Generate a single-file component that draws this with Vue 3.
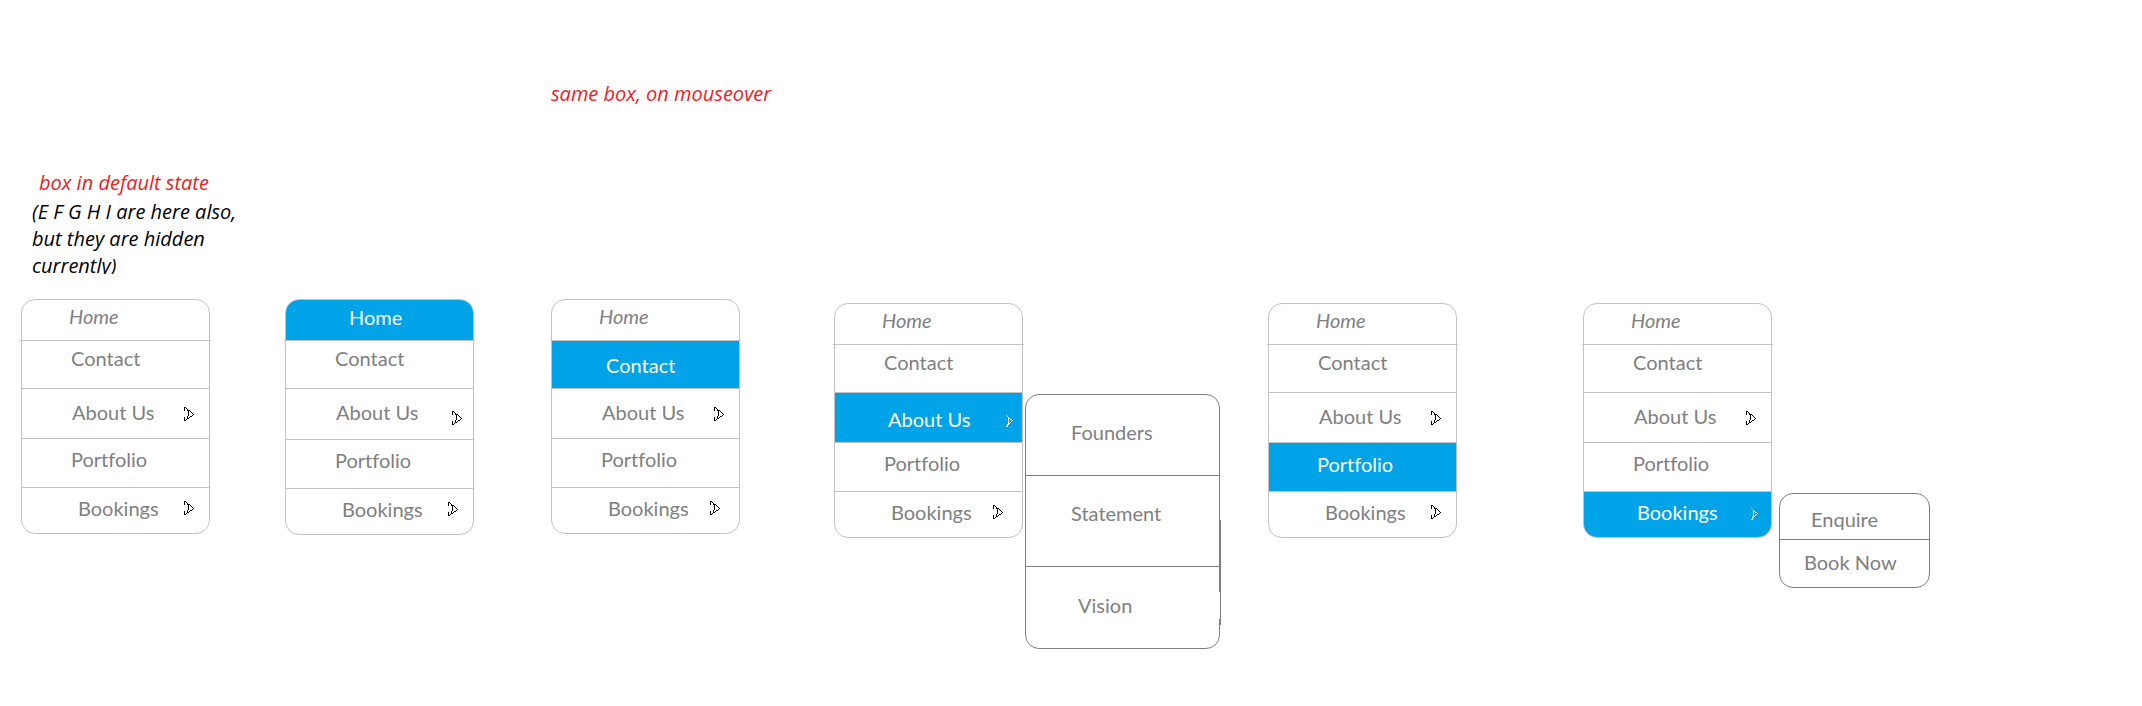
<script setup>
const entries = [
  { key: 'home', label: 'Home' },
  { key: 'contact', label: 'Contact' },
  { key: 'about', label: 'About Us', arrow: true },
  { key: 'portfolio', label: 'Portfolio' },
  { key: 'bookings', label: 'Bookings', arrow: true },
]

const menus = [
  { id: 'default', active: null },
  { id: 'on-home', active: 'home' },
  { id: 'on-contact', active: 'contact' },
  {
    id: 'on-about',
    active: 'about',
    low: true,
    sub: { name: 'about', items: ['Founders', 'Statement', 'Vision'] },
  },
  { id: 'on-portfolio', active: 'portfolio', low: true },
  {
    id: 'on-bookings',
    active: 'bookings',
    low: true,
    sub: { name: 'bookings', items: ['Enquire', 'Book Now'] },
  },
]
</script>

<template>
  <main class="board">
    <section class="notes">
      <div class="note-default">
        <p class="red indent">box in default state</p>
        <p class="hidden-note">(E F G H I are here also,<br />but they are hidden<br />currently)</p>
      </div>
      <p class="note-hover red">same box, on mouseover</p>
    </section>

    <section class="menus">
      <div v-for="menu in menus" :key="menu.id" class="state" :class="[menu.id, { low: menu.low }]">
        <nav :aria-label="menu.id">
          <ul class="menu">
            <li v-for="entry in entries" :key="entry.key" :class="entry.key">
              <a href="#" class="item" :class="{ active: menu.active === entry.key }">
                <span>{{ entry.label }}</span>
                <svg
                  v-if="entry.arrow && menu.active === entry.key"
                  class="arrow"
                  width="8"
                  height="12"
                  viewBox="0 0 8 12"
                  aria-hidden="true"
                >
                  <path
                    d="M0 0h1v1h-1zM1 1h1v1h-1zM2 2h1v7h-1zM1 9h1v2h-1zM0 11h2v1h-2zM3 3h1v1h-1zM4 4h2v1h-2zM6 5h1v1h-1zM5 6h1v1h-1zM4 7h1v1h-1zM3 8h1v1h-1zM2 9h1v1h-1z"
                  />
                </svg>
                <svg
                  v-else-if="entry.arrow"
                  class="arrow"
                  width="10"
                  height="14"
                  viewBox="0 0 10 14"
                  aria-hidden="true"
                >
                  <path
                    d="M0 0h2v1h-1v3h-1zM2 1h1v1h-1zM3 2h1v2h-1zM4 3h2v1h-2zM6 4h1v1h-1zM7 5h1v1h-1zM8 6h1v1h-1zM9 7h1v1h-1zM8 8h1v1h-1zM6 9h2v1h-2zM5 10h1v1h-1zM4 11h1v1h-1zM4 4h1v5h-1zM3 9h1v3h-1zM2 12h1v1h-1zM0 10h1v3h1v1h-2z"
                  />
                </svg>
              </a>
            </li>
          </ul>
        </nav>

        <ul v-if="menu.sub" class="submenu" :class="'sub-' + menu.sub.name">
          <li v-for="label in menu.sub.items" :key="label">
            <a href="#" class="subitem">{{ label }}</a>
          </li>
        </ul>
      </div>
    </section>
  </main>
</template>

<style>
body {
  margin: 0;
  background: #fff;
}
</style>

<style scoped>
.board {
  font-family: Lato, 'Open Sans', sans-serif;
  font-size: 20px;
  font-variant-ligatures: none;
  line-height: 24px;
  color: #7f7f7f;
  padding: 80px 0 56px 21px;
}

p,
ul {
  margin: 0;
  padding: 0;
  list-style: none;
}

.notes,
.menus {
  display: grid;
  grid-template-columns: 264fr 266fr 283fr 434fr 315fr 559fr;
  align-items: start;
}

.notes {
  font-family: 'Open Sans', 'Noto Sans', sans-serif;
  font-style: italic;
  line-height: 27px;
  margin-bottom: 25px;
  white-space: nowrap;
}

.note-default {
  grid-column: 1;
  padding: 89px 0 0 11px;
}

.note-hover {
  grid-column: 3;
}

.red {
  color: #ed1c24;
}

.indent {
  padding: 0 0 2px 7px;
}

.hidden-note {
  color: #000;
  height: 76px;
  overflow: hidden;
}

.state {
  display: flex;
  align-items: flex-start;
}

.low {
  padding-top: 4px;
}

.menu {
  box-sizing: border-box;
  width: 189px;
  border: 1px solid #c3c3c3;
  border-radius: 14px;
}

.menu li {
  position: relative;
}

.menu li + li {
  border-top: 1px solid #c3c3c3;
}

/* divider ends run slightly past the frame */
.home::after {
  content: '';
  position: absolute;
  left: -2px;
  right: -2px;
  bottom: -1px;
  height: 1px;
  background: #c3c3c3;
}

.item,
.subitem {
  display: flex;
  align-items: flex-start;
  justify-content: space-between;
  color: inherit;
  text-decoration: none;
  white-space: nowrap;
}

.home .item {
  padding: 4px 0 12px 47px;
  font-style: italic;
  border-radius: 13px 13px 0 0;
}

.contact .item {
  padding: 5px 0 18px 49px;
}

.about .item {
  padding: 11px 15px 14px 50px;
}

.portfolio .item {
  padding: 8px 0 16px 49px;
}

.bookings .item {
  padding: 8px 15px 13px 56px;
  border-radius: 0 0 13px 13px;
}

.item.active {
  background: #00a2e8;
  color: #fff;
}

.home .item.active {
  padding: 5px 0 11px 63px;
  font-style: normal;
}

.contact .item.active {
  padding: 12px 0 11px 54px;
}

.about .item.active {
  padding: 14px 8px 11px 53px;
}

.portfolio .item.active {
  padding: 9px 0 15px 48px;
}

.bookings .item.active {
  padding-left: 53px;
  padding-right: 12px;
}

.arrow {
  flex: none;
  margin-top: 7px;
  fill: #000;
  shape-rendering: crispEdges;
}

.active .arrow {
  fill: #fff;
  margin-top: 8px;
}

.bookings .arrow {
  margin-top: 5px;
}

.bookings .active .arrow {
  margin-top: 8px;
}

.on-home .about .item {
  padding-right: 11px;
}

.on-home .about .arrow {
  margin-top: 11px;
}

.on-contact .bookings .item,
.on-about .bookings .item {
  padding-right: 19px;
}

.submenu {
  box-sizing: border-box;
  position: relative;
  border: 1px solid #7f7f7f;
  border-radius: 14px;
}

.submenu li + li {
  border-top: 1px solid #7f7f7f;
}

.sub-about {
  width: 195px;
  margin: 91px 0 0 2px;
}

.sub-about .subitem {
  padding: 25px 0 31px 45px;
}

.sub-about li:nth-child(2) .subitem {
  padding-bottom: 41px;
}

.sub-about li:last-child .subitem {
  padding: 26px 0 31px 52px;
}

/* thickened stretch on the right edge */
.sub-about::before,
.sub-about::after {
  content: '';
  position: absolute;
  right: -2px;
  top: 125px;
  width: 1px;
  height: 105px;
  background: #7f7f7f;
}

.sub-about::after {
  right: -1px;
  top: 197px;
  height: 27px;
  background: #fff;
}

.sub-bookings {
  width: 151px;
  margin: 190px 0 0 7px;
}

.sub-bookings .subitem {
  padding: 13px 0 8px 31px;
}

.sub-bookings li:last-child .subitem {
  padding: 10px 0 13px 24px;
}
</style>
